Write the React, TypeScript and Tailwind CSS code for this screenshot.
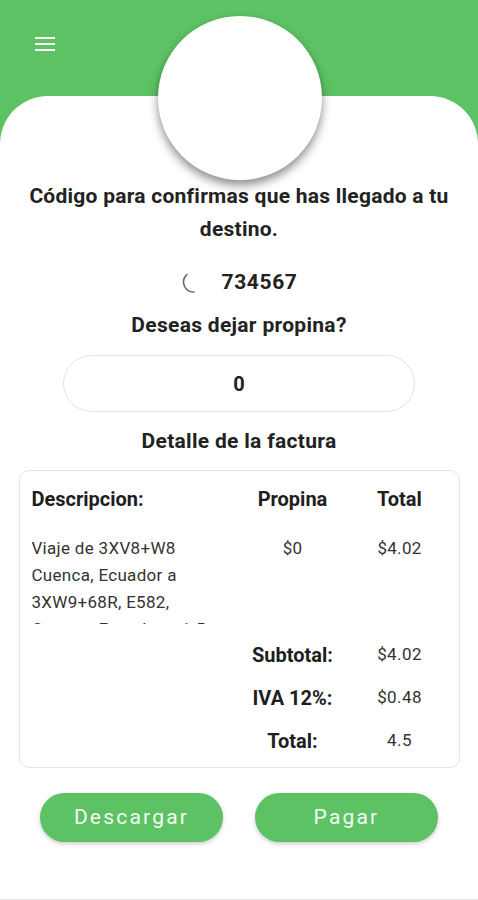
const GREEN = 'bg-[#5dc264]';

const Hamburger = () => (
    <svg width="20" height="14" viewBox="0 0 20 14" className="text-white">
        <rect x="0" y="0" width="20" height="2" fill="currentColor" />
        <rect x="0" y="6" width="20" height="2" fill="currentColor" />
        <rect x="0" y="12" width="20" height="2" fill="currentColor" />
    </svg>
);

const Spinner = () => (
    <svg width="24" height="24" viewBox="0 0 24 24" className="text-[#6b6b6b]">
        {/* only a slice of the arc is visible, like a progress indicator mid-spin */}
        <path d="M6 3.5 A10 10 0 0 0 13 21" fill="none" stroke="currentColor" strokeWidth="1.6" strokeLinecap="round" />
    </svg>
);

const SummaryRow = ({ label, value }: { label: string; value: string }) => (
    <div className="grid grid-cols-[208px_106px_108px] h-[43px] items-center">
        <div />
        <div className="text-center text-[20px] font-bold text-[#1e1e1e]">{label}</div>
        <div className="text-center text-[17px] tracking-[0.4px] text-[#333]">{value}</div>
    </div>
);

export default function App() {
    return (
        <div className={`relative w-[478px] h-[900px] overflow-hidden ${GREEN} font-['Roboto','Noto_Sans',sans-serif]`}>
            {/* Header */}
            <div className="h-[96px] pl-[35px] pt-[37px]">
                <Hamburger />
            </div>

            {/* Avatar */}
            <div className="absolute left-[158px] top-[16px] w-[164px] h-[164px] rounded-full bg-white shadow-[0_5px_10px_rgba(0,0,0,0.45)] z-10" />

            {/* Body */}
            <div className="h-[804px] bg-white rounded-t-[48px] pt-[84px] flex flex-col items-center border-b border-[#e4e4e4]">
                <h1 className="px-[20px] text-center text-[21px] leading-[33px] font-bold tracking-[0.25px] text-[#222]">
                    Código para confirmas que has llegado a tu destino.
                </h1>

                <div className="mt-[25px] flex items-center gap-[17px] h-[24px]">
                    <Spinner />
                    <span className="text-[21px] font-bold text-[#222] tracking-[0.6px]">734567</span>
                </div>

                <p className="mt-[18px] text-[21px] leading-[24px] font-bold tracking-[0.3px] text-[#222]">Deseas dejar propina?</p>

                <div className="mt-[18px] w-[352px] h-[57px] rounded-full border border-[#e2e2e2] flex items-center justify-center text-[20px] font-bold text-[#222]">
                    0
                </div>

                <p className="mt-[17px] text-[21px] leading-[24px] font-bold tracking-[0.3px] text-[#222]">Detalle de la factura</p>

                {/* Invoice card */}
                <div className="mt-[17px] w-[441px] h-[298px] rounded-[10px] border border-[#e4e4e4] pl-[12px] pt-[13px] flex flex-col">
                    <div className="grid grid-cols-[208px_106px_108px] h-[24px] items-center text-[20px] font-bold text-[#1e1e1e]">
                        <div>Descripcion:</div>
                        <div className="text-center">Propina</div>
                        <div className="text-center">Total</div>
                    </div>

                    <div className="mt-[27px] grid grid-cols-[208px_106px_108px] text-[17px] leading-[27px] tracking-[0.3px] text-[#333]">
                        {/* description box has a fixed height, the rest of the address is clipped */}
                        <div className="w-[196px] h-[89px] overflow-hidden">
                            Viaje de 3XV8+W8 Cuenca, Ecuador a 3XW9+68R, E582, Cuenca, Ecuador a 1.5 km
                        </div>
                        <div className="text-center">$0</div>
                        <div className="text-center">$4.02</div>
                    </div>

                    <div className="mt-[9px]">
                        <SummaryRow label="Subtotal:" value="$4.02" />
                        <SummaryRow label="IVA 12%:" value="$0.48" />
                        <SummaryRow label="Total:" value="4.5" />
                    </div>
                </div>

                {/* Actions */}
                <div className="mt-[25px] flex gap-[32px]">
                    <button className={`w-[183px] h-[49px] rounded-full ${GREEN} text-[#f3fbf3] text-[21px] font-normal tracking-[2.2px] shadow-[0_2px_4px_rgba(0,0,0,0.2)]`}>
                        Descargar
                    </button>
                    <button className={`w-[183px] h-[49px] rounded-full ${GREEN} text-[#f3fbf3] text-[21px] font-normal tracking-[2.2px] shadow-[0_2px_4px_rgba(0,0,0,0.2)]`}>
                        Pagar
                    </button>
                </div>
            </div>
        </div>
    );
}
